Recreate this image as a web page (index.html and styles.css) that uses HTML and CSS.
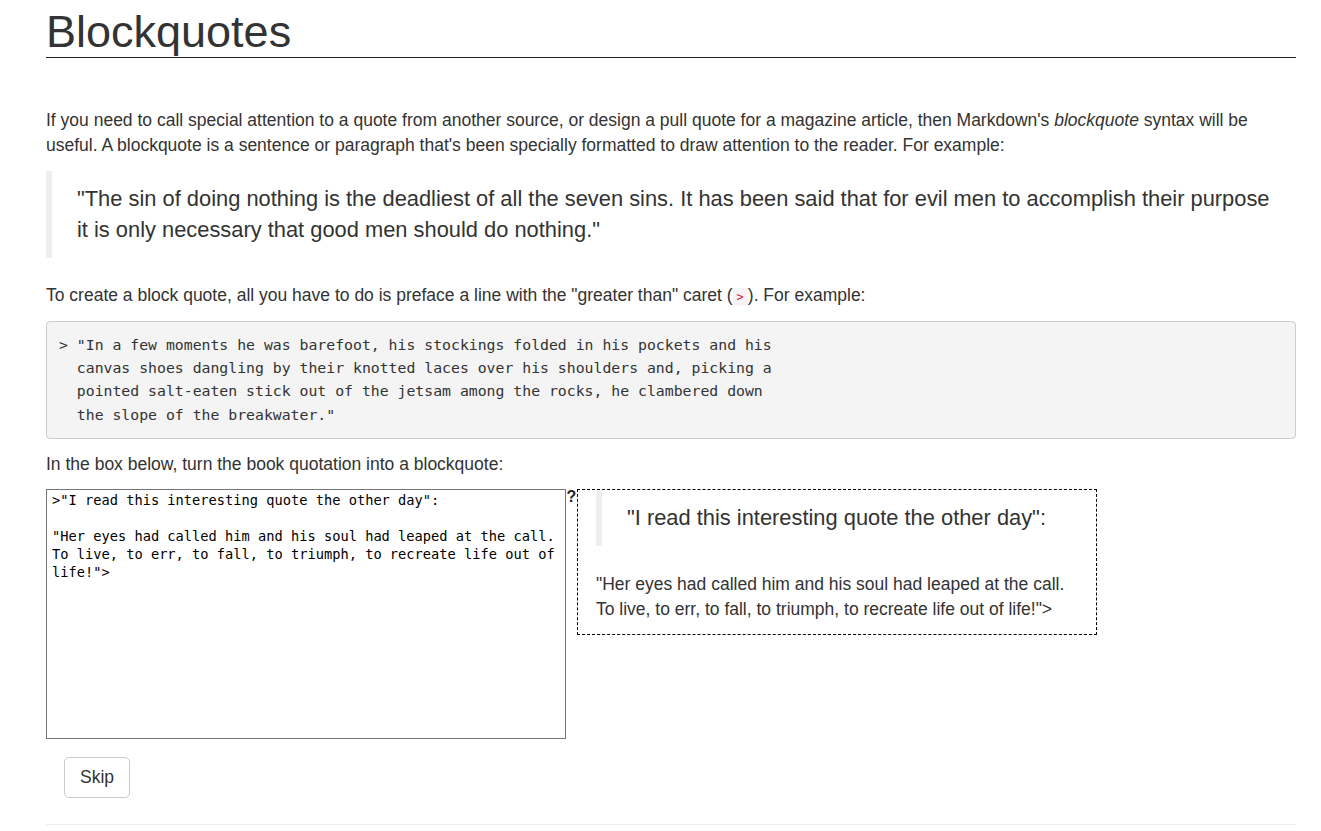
FILE: index.html
```html
<!DOCTYPE html>
<html>
<head>
<meta charset="utf-8">
<link rel="stylesheet" href="styles.css">
</head>
<body>
<div class="page">
  <h1 class="title">Blockquotes</h1>
  <p class="intro">If you need to call special attention to a quote from another source, or design a pull quote for a magazine article, then Markdown's <em>blockquote</em> syntax will be useful. A blockquote is a sentence or paragraph that's been specially formatted to draw attention to the reader. For example:</p>
  <blockquote class="quote">"The sin of doing nothing is the deadliest of all the seven sins. It has been said that for evil men to accomplish their purpose it is only necessary that good men should do nothing."</blockquote>
  <p class="text">To create a block quote, all you have to do is preface a line with the "greater than" caret (<code class="inline">&gt;</code>). For example:</p>
  <pre class="code">&gt; "In a few moments he was barefoot, his stockings folded in his pockets and his
  canvas shoes dangling by their knotted laces over his shoulders and, picking a
  pointed salt-eaten stick out of the jetsam among the rocks, he clambered down
  the slope of the breakwater."</pre>
  <p class="text text-task">In the box below, turn the book quotation into a blockquote:</p>
  <div class="workspace">
    <textarea class="editor" spellcheck="false">&gt;"I read this interesting quote the other day":

"Her eyes had called him and his soul had leaped at the call. To live, to err, to fall, to triumph, to recreate life out of life!"&gt;</textarea>
    <span class="help">?</span>
    <div class="preview">
      <blockquote class="quote quote-preview">"I read this interesting quote the other day":</blockquote>
      <p class="preview-text">"Her eyes had called him and his soul had leaped at the call. To live, to err, to fall, to triumph, to recreate life out of life!"&gt;</p>
    </div>
  </div>
  <button class="btn-skip" type="button">Skip</button>
  <div class="rule"></div>
</div>
</body>
</html>
```

FILE: styles.css
```css
html, body {
  margin: 0;
  padding: 0;
  background: #fff;
}
body {
  font-family: "Liberation Sans", Arial, sans-serif;
  font-size: 17.5px;
  line-height: 25px;
  color: #333;
}
.page {
  margin: 0 25px 0 46px;
  padding-top: 7px;
}
.title {
  font-size: 45px;
  font-weight: normal;
  line-height: 1.1;
  margin: 0 0 50px;
  border-bottom: 1px solid #222;
  color: #333;
}
.intro {
  margin: 0 0 13px;
}
.quote {
  margin: 0 0 25px;
  padding: 12.5px 20px 12.5px 25px;
  border-left: 6px solid #eee;
  font-size: 21.875px;
  line-height: 31.25px;
}
.text {
  margin: 0 0 11px;
}
.inline {
  font-family: "DejaVu Sans Mono", monospace;
  font-size: 12px;
  color: #c7254e;
  background: #f9f2f4;
  border-radius: 5px;
  padding: 2px 4px;
}
.code {
  margin: 0 0 13px;
  padding: 10.5px 12px 11.5px;
  background: #f4f4f4;
  border: 1px solid #ccc;
  border-radius: 4px;
  font-family: "DejaVu Sans Mono", monospace;
  font-size: 14.8px;
  line-height: 23.4px;
  color: #333;
  white-space: pre;
}
.text-task {
  margin-bottom: 12px;
}
.workspace {
  display: flex;
  align-items: flex-start;
  margin-bottom: 18px;
}
.editor {
  width: 520px;
  height: 250px;
  box-sizing: border-box;
  margin: 0;
  border: 1px solid #767676;
  padding: 1px 2px 2px 5px;
  font-family: "DejaVu Sans Mono", monospace;
  font-size: 13.7px;
  line-height: 18px;
  color: #000;
  resize: none;
  outline: none;
  background: #fff;
}
.help {
  width: 11px;
  font-family: "Liberation Sans", Arial, sans-serif;
  font-weight: bold;
  font-size: 16px;
  line-height: 16px;
  color: #222;
  text-align: center;
}
.preview {
  width: 520px;
  box-sizing: border-box;
  border: 1px dashed #000;
  padding: 0 18px;
}
.quote-preview {
  margin: 0 0 26px;
}
.preview-text {
  margin: 0 0 12.5px;
}
.btn-skip {
  margin-left: 18px;
  display: block;
  background: #fff;
  border: 1px solid #ccc;
  border-radius: 5px;
  padding: 7px 15px;
  font-family: "Liberation Sans", Arial, sans-serif;
  font-size: 17.5px;
  line-height: 25px;
  color: #333;
}
.rule {
  margin-top: 26px;
  border-top: 1px solid #eee;
}
```
